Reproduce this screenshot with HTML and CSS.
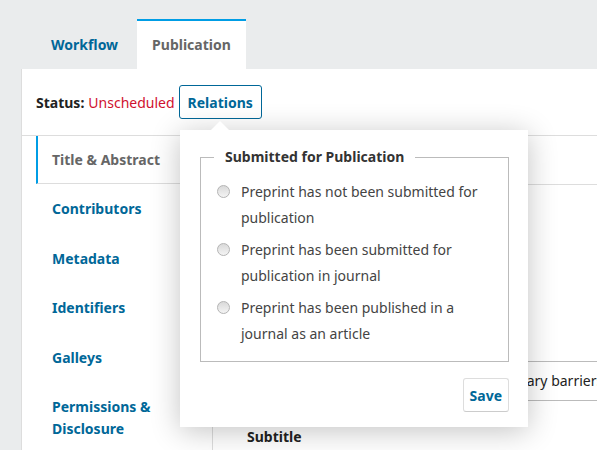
FILE: index.html
```html
<!DOCTYPE html>
<html lang="en">
<head>
<meta charset="utf-8">
<title>Publication</title>
<link rel="stylesheet" href="styles.css">
</head>
<body>
<div class="page">
  <nav class="tabs">
    <a class="tab">Workflow</a>
    <a class="tab tab--active">Publication</a>
  </nav>
  <section class="panel">
    <div class="status-bar">
      <span class="status-label">Status:</span>
      <span class="status-value">Unscheduled</span>
      <button class="btn btn--relations">Relations</button>
    </div>
    <div class="workspace">
      <ul class="side-nav">
        <li class="side-nav__item side-nav__item--active">Title &amp; Abstract</li>
        <li class="side-nav__item">Contributors</li>
        <li class="side-nav__item">Metadata</li>
        <li class="side-nav__item">Identifiers</li>
        <li class="side-nav__item">Galleys</li>
        <li class="side-nav__item">Permissions &amp; Disclosure</li>
      </ul>
      <div class="content">
        <div class="content__header"></div>
        <div class="form">
          <div class="field">
            <div class="field__label">Title</div>
            <div class="field__input">Overcoming the linguistic or the temporary barriers of open science</div>
          </div>
          <div class="field">
            <div class="field__label">Subtitle</div>
          </div>
        </div>
      </div>
    </div>
  </section>

  <div class="popover">
    <fieldset class="fieldset">
      <legend class="fieldset__legend">Submitted for Publication</legend>
      <label class="option"><span class="radio"></span><span class="option__text">Preprint has not been submitted for publication</span></label>
      <label class="option"><span class="radio"></span><span class="option__text">Preprint has been submitted for publication in journal</span></label>
      <label class="option"><span class="radio"></span><span class="option__text">Preprint has been published in a journal as an article</span></label>
    </fieldset>
    <div class="popover__footer">
      <button class="btn btn--save">Save</button>
    </div>
  </div>
</div>
</body>
</html>
```

FILE: styles.css
```css
html, body {
  margin: 0;
  padding: 0;
  overflow: hidden;
}
body {
  background: #eaeced;
  font-family: "Noto Sans", "Open Sans", sans-serif;
  font-size: 14px;
  color: #222;
  width: 597px;
  height: 450px;
}
.page {
  position: relative;
  height: 450px;
  overflow: hidden;
}
.tabs {
  display: flex;
  gap: 4px;
  padding: 19px 0 0 36px;
}
.tab {
  display: block;
  padding: 0 15px;
  line-height: 48px;
  border-top: 2px solid transparent;
  font-weight: 700;
  color: #006798;
}
.tab--active {
  background: #fff;
  border-top-color: #009de5;
  color: #666;
}
.panel {
  margin-left: 21px;
  width: 576px;
  background: #fff;
  border-left: 1px solid #ddd;
  height: 400px;
}
.status-bar {
  display: flex;
  align-items: center;
  height: 66px;
  padding-left: 14px;
  border-bottom: 1px solid #ddd;
}
.status-label {
  font-weight: 700;
  color: #222;
  margin-right: 4px;
}
.status-value {
  color: #d0102e;
}
.btn {
  font-family: inherit;
  font-size: 14px;
  font-weight: 700;
  color: #006798;
  background: #fff;
  border-radius: 3px;
  height: 34px;
  padding: 0 8px;
  cursor: pointer;
}
.btn--relations {
  margin-left: 4px;
  border: 1px solid #006798;
}
.workspace {
  display: flex;
}
.side-nav {
  list-style: none;
  margin: 0;
  padding: 0 0 0 14px;
  width: 176px;
  flex: none;
}
.side-nav__item {
  border-left: 2px solid transparent;
  padding: 14px 14px 13.5px;
  line-height: 22px;
  font-weight: 700;
  color: #006798;
}
.side-nav__item--active {
  border-left-color: #009de5;
  border-bottom: 1px solid #ddd;
  padding: 13px 14px 12px;
  color: #666;
}
.content {
  flex: 1;
  min-width: 0;
  border-left: 1px solid #ddd;
  min-height: 320px;
  overflow: hidden;
}
.content__header {
  height: 48px;
  border-bottom: 1px solid #ddd;
}
.form {
  padding: 148px 0 0 34px;
}
.field {
  margin-bottom: 26px;
}
.field__label {
  font-weight: 700;
  line-height: 20px;
  margin-bottom: 8px;
  color: #222;
}
.field__input {
  box-sizing: border-box;
  height: 40px;
  width: 560px;
  border: 1px solid #bbb;
  border-right: 0;
  padding: 0 10px 0 15px;
  line-height: 38px;
  color: #222;
  white-space: nowrap;
  overflow: hidden;
}
.popover {
  position: absolute;
  left: 180px;
  top: 130px;
  width: 348px;
  box-sizing: border-box;
  padding: 17px 20px 15px;
  background: #fff;
  box-shadow: 0 4px 28px rgba(0, 0, 0, 0.24);
}
.popover::before {
  content: "";
  position: absolute;
  top: -9px;
  left: 31px;
  border-left: 9px solid transparent;
  border-right: 9px solid transparent;
  border-bottom: 9px solid #fff;
}
.fieldset {
  margin: 0;
  border: 1px solid #bbb;
  padding: 0 14px 15px 16px;
}
.fieldset__legend {
  font-weight: 700;
  line-height: 20px;
  padding: 0 11px;
  margin-left: -3px;
  color: #333;
}
.option {
  display: flex;
  gap: 11px;
  margin-top: 7px;
  line-height: 25.5px;
  color: #444;
}
.option:first-of-type {
  margin-top: 12px;
}
.radio {
  flex: none;
  box-sizing: border-box;
  width: 13px;
  height: 13px;
  margin-top: 6px;
  border-radius: 50%;
  border: 1px solid #b4b4b4;
  background: linear-gradient(#d9d9d9, #f4f4f4);
}
.option__text {
  width: 253px;
}
.popover__footer {
  display: flex;
  justify-content: flex-end;
  margin-top: 16px;
  margin-right: -1px;
}
.btn--save {
  padding: 0 6px;
  border: 1px solid #ddd;
  border-bottom-color: #ccc;
}
```
